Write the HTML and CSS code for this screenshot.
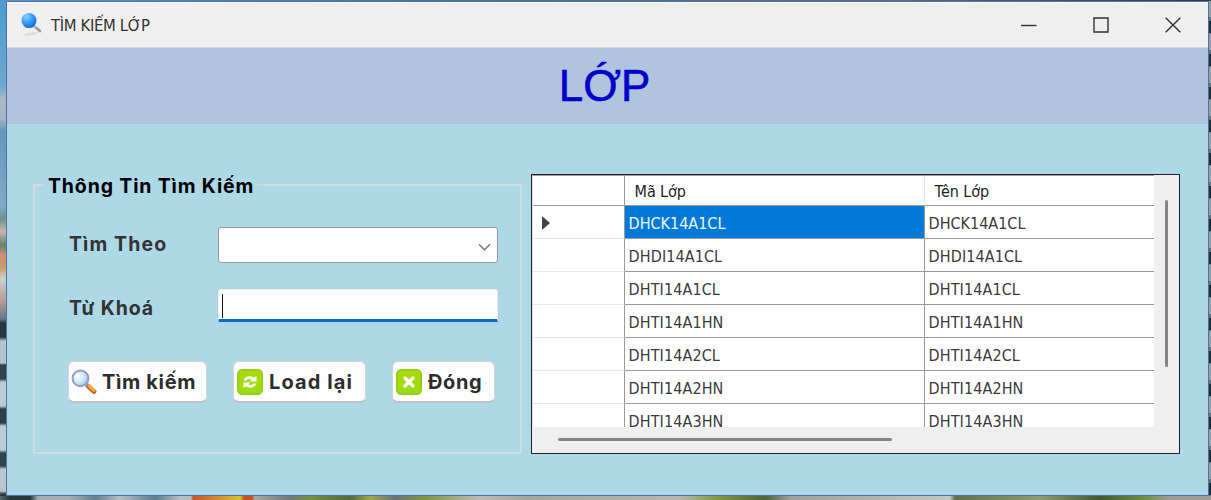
FILE: index.html
```html
<!DOCTYPE html>
<html lang="vi">
<head>
<meta charset="utf-8">
<title>TÌM KIẾM LỚP</title>
<link rel="stylesheet" href="styles.css">
</head>
<body>
<div class="desktop">
  <div class="edge edge-top"></div>
  <div class="edge edge-left"></div>
  <main class="window">
    <header class="titlebar">
      <svg class="app-icon" width="22" height="24" viewBox="0 0 22 24">
        <defs><radialGradient id="ball" cx=".35" cy=".25" r=".8"><stop offset="0" stop-color="#8fd0ff"/><stop offset=".5" stop-color="#379cf5"/><stop offset="1" stop-color="#1668d8"/></radialGradient></defs>
        <ellipse cx="10" cy="21" rx="7" ry="1.6" fill="#dcdcdc" transform="rotate(-10 10 21)"/>
        <path d="M13 13l6 5" stroke="#999" stroke-width="2.600" stroke-linecap="round"/>
        <path d="M12 12l3 2.500" stroke="#ccc" stroke-width="1.500"/>
        <circle cx="8" cy="7.600" r="7.500" fill="url(#ball)"/>
      </svg>
      <span class="title">TÌM KIẾM LỚP</span>
      <div class="controls">
        <svg width="16" height="16" viewBox="0 0 16 16"><path d="M0 8.500h15.500"/></svg>
        <svg width="16" height="16" viewBox="0 0 16 16"><path d="M1 1h14v14H1z"/></svg>
        <svg width="16" height="16" viewBox="0 0 16 16"><path d="M.7.700l14.600 14.600M15.300.700L.7 15.300"/></svg>
      </div>
    </header>
    <h1 class="banner">LỚP</h1>
    <div class="content">
      <fieldset class="search">
        <legend>Thông Tin Tìm Kiếm</legend>
        <div class="field">
          <span class="label">Tìm Theo</span>
          <div class="combo"><svg width="13" height="8" viewBox="0 0 14 8"><path d="M1 1l6 6 6-6"/></svg></div>
        </div>
        <div class="field">
          <span class="label keyword">Từ Khoá</span>
          <div class="textbox"><span class="caret"></span></div>
        </div>
        <div class="actions">
          <div class="button find">
            <svg width="26" height="26" viewBox="0 0 26 26">
              <defs><radialGradient id="lens" cx=".3" cy=".35" r=".75"><stop offset="0" stop-color="#fff"/><stop offset=".6" stop-color="#c8e6fa"/><stop offset="1" stop-color="#92c2ec"/></radialGradient></defs>
              <path d="M17 17l6 5.500" stroke="#b86619" stroke-width="4.800" stroke-linecap="round"/>
              <path d="M17.500 16.500l5.500 5" stroke="#ffad36" stroke-width="3" stroke-linecap="round"/>
              <path d="M14 14l3 3" stroke="#8793b4" stroke-width="2.500"/>
              <circle cx="9.500" cy="9.300" r="7.900" fill="url(#lens)" stroke="#929cc4" stroke-width="2"/>
            </svg>
            <span>Tìm kiếm</span>
          </div>
          <div class="button reload">
            <svg width="26" height="26" viewBox="0 0 26 26">
              <defs><linearGradient id="lime" x2="0" y2="1"><stop stop-color="#a9d90b"/><stop offset="1" stop-color="#9bdc12"/></linearGradient></defs>
              <rect x=".7" y=".7" width="24.600" height="24.600" rx="4.500" fill="url(#lime)" stroke="#8fc914" stroke-width="1.400"/>
              <path d="M6.500 11.500C8 7.300 13 6 16.600 8.800L19.500 7v5.500h-7l2.200-1.700c-2-1.200-4-.9-5.200.7zM19.500 14.500c-1.500 4.200-6.500 5.500-10.100 2.700L6.500 19v-5.500h7l-2.200 1.700c2 1.200 4 .9 5.200-.7z" fill="#fff"/>
            </svg>
            <span>Load lại</span>
          </div>
          <div class="button close">
            <svg width="26" height="26" viewBox="0 0 26 26">
              <rect x=".7" y=".7" width="24.600" height="24.600" rx="4.500" fill="url(#lime)" stroke="#8fc914" stroke-width="1.400"/>
              <path d="M9 9l8 8M17 9l-8 8" stroke="#fff" stroke-width="3.300" stroke-linecap="round"/>
            </svg>
            <span>Đóng</span>
          </div>
        </div>
      </fieldset>
      <section class="grid">
        <div class="rows">
          <div class="row head"><span></span><span>Mã Lớp</span><span>Tên Lớp</span></div>
          <div class="row selected"><span><svg width="8" height="14" viewBox="0 0 8 14"><path d="M0 0l8 7-8 7z" fill="#444"/></svg></span><span>DHCK14A1CL</span><span>DHCK14A1CL</span></div>
          <div class="row"><span></span><span>DHDI14A1CL</span><span>DHDI14A1CL</span></div>
          <div class="row"><span></span><span>DHTI14A1CL</span><span>DHTI14A1CL</span></div>
          <div class="row"><span></span><span>DHTI14A1HN</span><span>DHTI14A1HN</span></div>
          <div class="row"><span></span><span>DHTI14A2CL</span><span>DHTI14A2CL</span></div>
          <div class="row"><span></span><span>DHTI14A2HN</span><span>DHTI14A2HN</span></div>
          <div class="row"><span></span><span>DHTI14A3HN</span><span>DHTI14A3HN</span></div>
        </div>
        <div class="vscroll"><i></i></div>
        <div class="hscroll"><i></i></div>
      </section>
    </div>
  </main>
  <div class="edge edge-right"></div>
  <div class="edge edge-bottom"></div>
</div>
</body>
</html>
```

FILE: styles.css
```css
* { box-sizing: border-box; }
body { margin: 0; font-family: "DejaVu Sans Condensed", "DejaVu Sans", sans-serif; }
svg { display: block; flex: none; }

.desktop {
  display: grid;
  grid-template: 1px 495px 4px / 6px 1203px 2px;
  width: 1211px;
  height: 500px;
  overflow: hidden;
}
.edge-top { grid-column: 1 / 4; background: linear-gradient(90deg, #5297c4, #4c7188 40%, #5d6b78 75%, #303b46); }
.edge-left {
  background: linear-gradient(#4b9bce 0, #6da9cf 85px, #aeb8c5 98px, #a4b6c6 118px, #6298bb 130px, #84aac6 205px, #66938e 218px, #c9b4af 230px, #65846b 244px, #cf8f79 254px, #c99963 266px, #c9d0d0 278px, #b69b91 300px, #667b83 318px, #263740 322px 336px, #b5c6d1 340px 362px, #2f444b 364px 378px, #bdcbd5 381px 405px, #2b424a 408px 422px, #c0ccd4 425px 449px, #2f454c 452px 465px, #bdc6cc 468px 490px, #2b3b3e 493px);
}
.edge-right { background: repeating-linear-gradient(#94a0a4 0 16px, #63747b 16px 20px, #202f36 20px 32px, #718087 32px 33px); }
.edge-bottom {
  grid-column: 1 / 4;
  background: linear-gradient(90deg, #596b6d 0, #26383d 10px 30px, #a5adb1 38px 70px, #648092 95px, #b6bfc5 120px, #5c7c91 155px, #b7bec2 180px 191px, #c9532b 193px, #d99b30 225px, #d5c52f 240px, #c75324 244px 252px, #aaa9a6 255px, #717876 290px, #77923f 310px, #52693b 350px, #a0a847 370px, #6d7277 395px, #81963e 425px, #c0bcb9 480px, #a3a59b 525px, #b8b8ad 680px, #879b42 715px, #4e6338 765px, #9f9f9b 790px, #b7b7b5 890px, #c4c6c4 950px, #61724c 955px, #8e9c70 1040px, #42592f 1100px, #718f42 1145px, #a09d94 1170px);
}

.window { display: flex; flex-direction: column; border: 1px solid #4d70ad; background: #add8e6; }

.titlebar { display: flex; align-items: center; height: 46px; padding: 0 27px 0 14px; background: #efefef; border-top: 1px solid #f7f9fc; border-bottom: 1px solid #cfd9e3; }
.app-icon { margin-top: 0; }
.title { margin: 2px 0 0 8px; font-size: 16.500px; line-height: 20px; letter-spacing: -.35px; color: #333; white-space: nowrap; }
.controls { display: flex; gap: 56px; margin-left: auto; }
.controls svg { fill: none; stroke: #333; stroke-width: 1.400; }

.banner { height: 76px; margin: 0; padding-right: 6px; background: #b0c4de; color: #0000cd; font: 400 44px/76px "Liberation Sans", Arial, sans-serif; text-align: center; -webkit-text-stroke: .6px #0000cd; }

.content { display: flex; gap: 9px; padding: 50px 28px 0 26px; }

.search { width: 489px; height: 280px; min-width: 0; margin: 0; padding: 0 22px 0 34px; border: 2px solid #d3dadd; font-family: Inter, sans-serif; font-weight: 700; }
.search legend { height: 22px; margin-left: -26px; padding: 0 3px 0 5px; color: #000; font-size: 19.500px; line-height: 24px; letter-spacing: .85px; white-space: nowrap; }
.field { display: flex; align-items: center; height: 36px; margin-top: 31px; color: #333; font-size: 19.500px; letter-spacing: 1.100px; }
.field + .field { height: 33px; margin-top: 26px; }
.label { width: 149px; padding-bottom: 2px; line-height: 28px; white-space: nowrap; }
.field .keyword { padding: 5px 0 0; letter-spacing: .9px; }
.combo { display: flex; align-items: center; justify-content: flex-end; width: 281px; height: 36px; padding: 3px 6px 0 0; background: #fff; border: 1px solid #999; border-radius: 3px; }
.combo svg { fill: none; stroke: #777; stroke-width: 1.500; }
.textbox { width: 281px; height: 33px; padding: 4px 4px 4px 3px; background: #fff; border: 1px solid #e8edf0; border-bottom: 3px solid #0a6cc6; border-radius: 3px 3px 1px 1px; }
.caret { display: block; width: 1.500px; height: 24px; background: #111; }
.actions { display: flex; margin-top: 39px; color: #2d2d2d; font-size: 20px; letter-spacing: .65px; }
.button { display: flex; align-items: center; height: 42px; padding: 1px 0 0 3px; gap: 6px; background: #fdfdfd; border: 1px solid #d3d3d3; border-bottom: 2px solid #bfc1c2; border-radius: 6px; line-height: 28px; white-space: nowrap; }
.find { width: 139px; margin-left: -1px; padding-left: 2px; gap: 5px; }
.reload { width: 133px; margin-left: 26px; letter-spacing: 1.100px; }
.close { width: 103px; margin-left: 26px; }

.grid { display: grid; grid-template: 252px 25px / 622px 25px; width: 650px; height: 280px; border: 1.500px solid #222; background: #efefef; }
.rows { overflow: hidden; background: #fff; border-top: 1px solid #a0a0a0; border-left: 1px solid #e0e0e0; border-radius: 0 0 4px 0; }
.row { display: grid; grid-template-columns: 92px 300px 1fr; height: 33px; color: #3a3a3a; font-size: 16px; line-height: 36px; white-space: nowrap; letter-spacing: .1px; }
.row span { height: 33px; padding-left: 4px; border-right: 1px solid #999; border-bottom: 1px solid #999; }
.row span:first-child { padding: 10px 0 0 9px; border-bottom-color: #e6e6e6; }
.row span:last-child { border-right: 0; }
.head { height: 30px; line-height: 32px; color: #222; letter-spacing: -.1px; }
.head span { height: 30px; padding-left: 10px; }
.head span:first-child { border-bottom-color: #999; }
.head span:nth-child(2) { border-right-color: #e6e6e6; }
.selected { letter-spacing: 0; }
.selected span:nth-child(2) { background: #0078d7; color: #f2f8ff; }
.vscroll { padding: 25px 0 0 11px; }
.vscroll i { display: block; width: 3px; height: 167px; border-radius: 2px; background: #858585; }
.hscroll { grid-column: 1 / 3; padding: 11px 0 0 26px; }
.hscroll i { display: block; width: 334px; height: 3px; border-radius: 2px; background: #858585; }
```
